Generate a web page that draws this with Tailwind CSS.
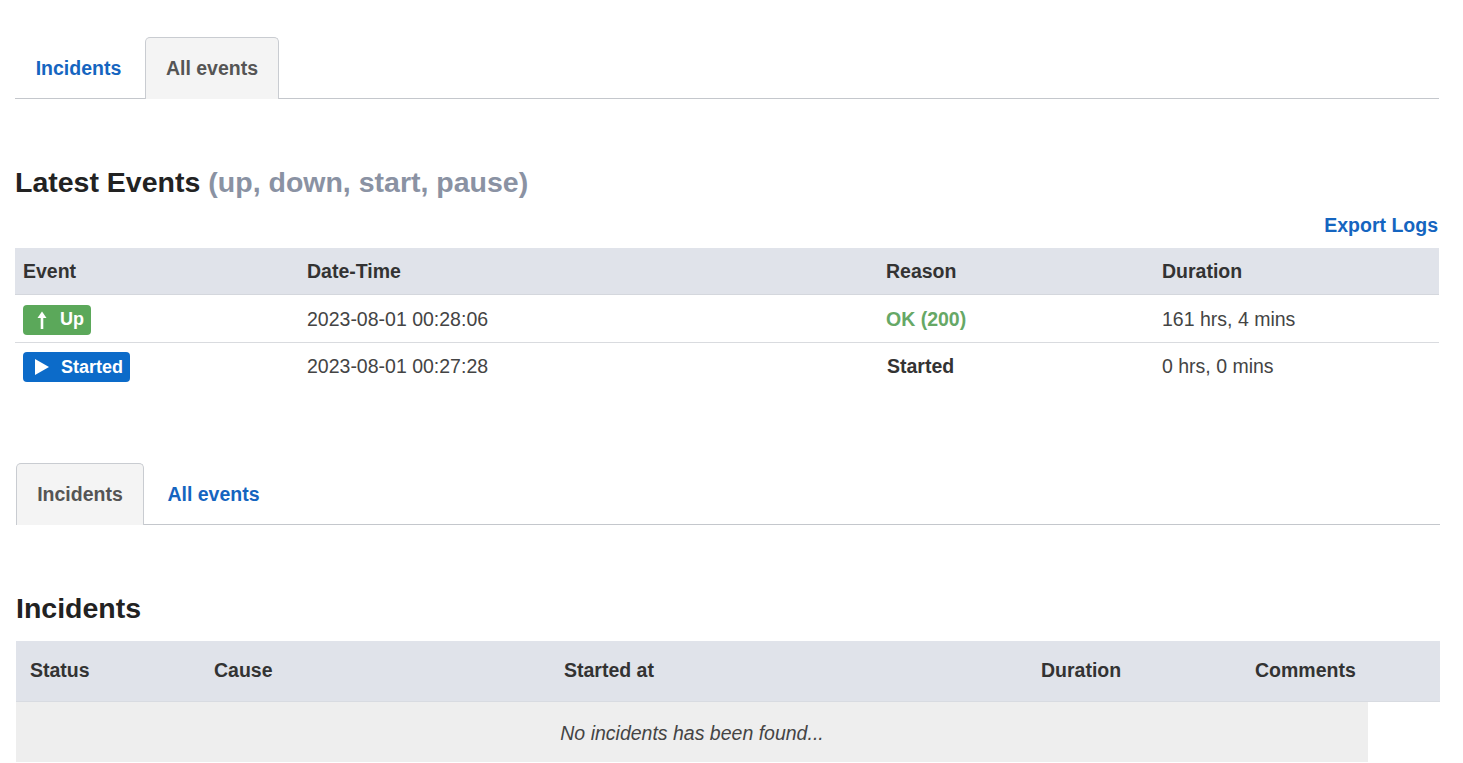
<!DOCTYPE html>
<html lang="en">
<head>
<meta charset="utf-8">
<title>Events</title>
<script src="https://cdn.jsdelivr.net/npm/@tailwindcss/browser@4"></script>
</head>
<body class="bg-white font-['Liberation_Sans',Arial,sans-serif] text-[19.5px] text-[#444] overflow-hidden">
<main class="h-[763px] w-[1463px] overflow-hidden pt-[37px]">

  <section class="ml-[15px] w-[1424px]">
    <nav class="flex h-[62px] border-b border-[#c4c7cc] font-bold">
      <a class="flex h-[62px] w-[130px] items-center justify-center pt-px pr-[3px] text-[#1565c0]">Incidents</a>
      <a class="flex h-[62px] w-[134px] items-center justify-center rounded-t-[5px] border border-b-0 border-[#c9ccd1] bg-[#f4f4f4] pt-px text-[#555]">All events</a>
    </nav>
    <h2 class="mt-[66px] flex h-[34px] items-center gap-[8px] text-[28.5px] font-bold text-[#222]">Latest Events <span class="text-[#8a92a3]">(up, down, start, pause)</span></h2>
    <div class="mt-[14px] flex h-[24px] items-center justify-end pt-[2px] font-bold text-[#1565c0]"><a class="mr-px">Export Logs</a></div>
    <div class="mt-[11px] grid grid-cols-[284px_579px_276px_285px]">
      <div class="col-span-4 grid h-[47px] grid-cols-subgrid items-center border-b border-[#d4d7dd] bg-[#e0e3ea] pt-[2px] font-bold text-[#333]">
        <div class="pl-[8px]">Event</div>
        <div class="pl-[8px]">Date-Time</div>
        <div class="pl-[8px]">Reason</div>
        <div class="pl-[8px]">Duration</div>
      </div>
      <div class="col-span-4 grid h-[48px] grid-cols-subgrid items-center border-b border-[#d9dbdf] pt-[2px]">
        <div class="pl-[8px]">
          <span class="flex h-[30px] w-[68px] items-center rounded-[4px] bg-[#5ba85a] pl-[14px] text-[18px] font-bold text-white">
            <svg class="h-[18px] w-[10px]" viewBox="0 0 10 18" fill="none" stroke="currentColor" stroke-width="2.6"><path d="M5 4V18"/><path d="M0.5 7L5 0.5L9.5 7" fill="currentColor" stroke="none"/></svg>
            <span class="ml-[13px]">Up</span>
          </span>
        </div>
        <div class="pl-[8px]">2023-08-01 00:28:06</div>
        <div class="pl-[8px] font-bold text-[#66a866]">OK (200)</div>
        <div class="pl-[8px]">161 hrs, 4 mins</div>
      </div>
      <div class="col-span-4 grid h-[47px] grid-cols-subgrid items-center pt-[1px]">
        <div class="pl-[8px]">
          <span class="flex h-[30px] w-[107px] items-center rounded-[4px] bg-[#0c6bc9] pl-[12px] text-[18px] font-bold text-white">
            <svg class="h-[16px] w-[14px]" viewBox="0 0 14 16" fill="currentColor"><path d="M0 0L14 8L0 16Z"/></svg>
            <span class="ml-[12px]">Started</span>
          </span>
        </div>
        <div class="pl-[8px]">2023-08-01 00:27:28</div>
        <div class="pl-[9px] font-bold text-[#333]">Started</div>
        <div class="pl-[8px]">0 hrs, 0 mins</div>
      </div>
    </div>
  </section>

  <section class="mt-[73px] ml-[16px] w-[1424px]">
    <nav class="flex h-[62px] border-b border-[#c4c7cc] font-bold">
      <a class="flex h-[62px] w-[128px] items-center justify-center rounded-t-[5px] border border-b-0 border-[#c9ccd1] bg-[#f4f4f4] pt-px text-[#555]">Incidents</a>
      <a class="flex h-[62px] w-[139px] items-center justify-center pt-px text-[#1565c0]">All events</a>
    </nav>
    <h2 class="mt-[66px] flex h-[34px] items-center text-[28.5px] font-bold text-[#222]">Incidents</h2>
    <div class="mt-[16px] grid h-[61px] grid-cols-[184px_350px_477px_214px_199px] items-center border-b border-[#d8dbe1] bg-[#e0e3ea] font-bold text-[#333]">
      <div class="pl-[14px]">Status</div>
      <div class="pl-[14px]">Cause</div>
      <div class="pl-[14px]">Started at</div>
      <div class="pl-[14px]">Duration</div>
      <div class="pl-[14px]">Comments</div>
    </div>
    <div class="flex h-[60px] w-[1352px] items-center justify-center bg-[#eeeeee] pt-[3px] italic">No incidents has been found...</div>
  </section>

</main>
</body>
</html>
